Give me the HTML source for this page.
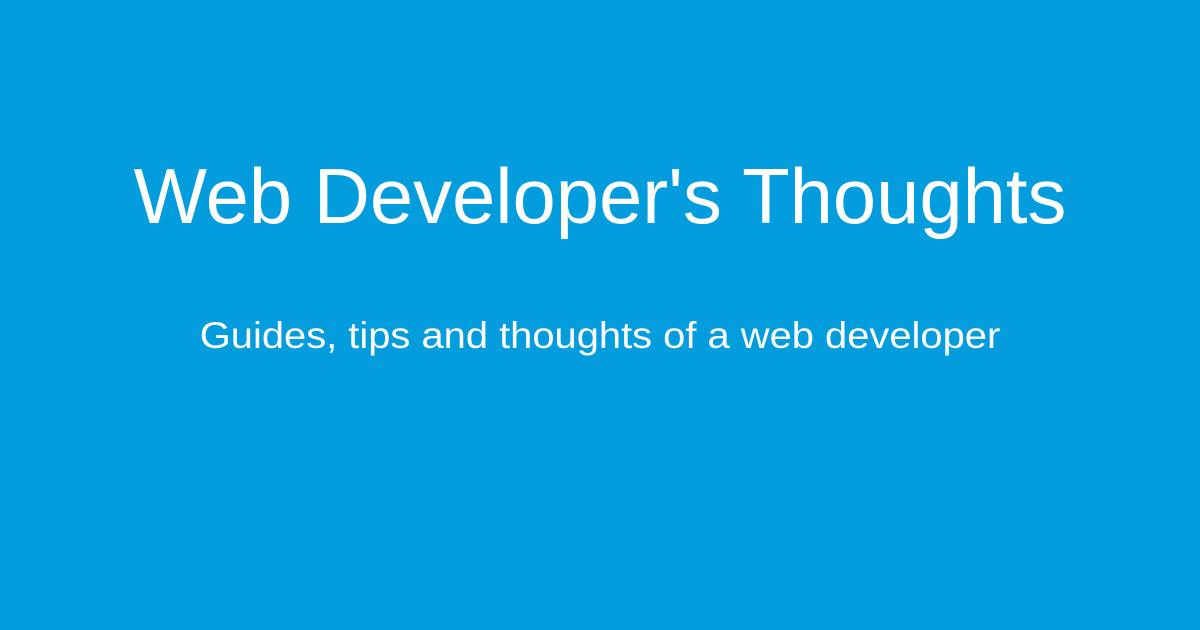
<!DOCTYPE html>
<html><head><style>
html,body{margin:0;padding:0;}
body{width:1200px;height:630px;background:#039cdd;position:relative;overflow:hidden;font-family:"Liberation Sans",Arial,sans-serif;color:#fff;}
.t{position:absolute;left:0;width:1200px;text-align:center;line-height:1;white-space:nowrap;}
#h{top:157px;font-size:78px;transform:scaleX(0.997);}
#s{top:317px;font-size:37px;transform:scaleX(1.078);}
</style></head><body>
<div class="t" id="h">Web Developer's Thoughts</div>
<div class="t" id="s">Guides, tips and thoughts of a web developer</div>
</body></html>
